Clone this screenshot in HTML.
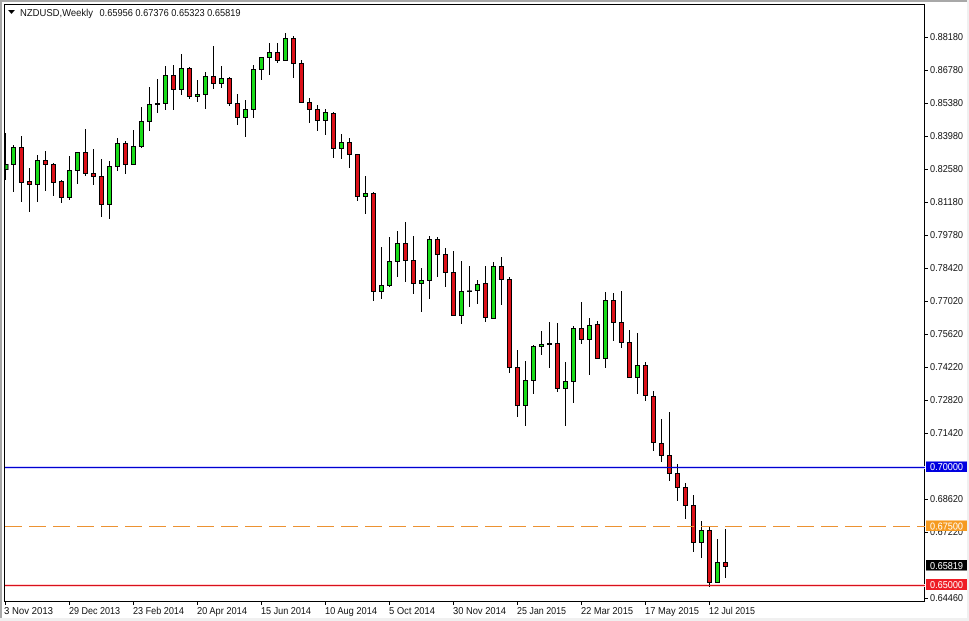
<!DOCTYPE html>
<html><head><meta charset="utf-8"><style>
html,body{margin:0;padding:0;background:#fff;width:969px;height:621px;overflow:hidden}
svg{display:block}
text{font-family:"Liberation Sans",sans-serif;font-size:10px;fill:#111;text-rendering:geometricPrecision}
</style></head><body>
<svg width="969" height="621" viewBox="0 0 969 621" xmlns="http://www.w3.org/2000/svg">
<rect width="969" height="621" fill="#fff"/>
<rect x="0" y="0" width="969" height="2" fill="#a8a8a8"/>
<rect x="0" y="0" width="2" height="621" fill="#a8a8a8"/>
<rect x="967" y="0" width="2" height="621" fill="#f0f0f0"/>
<rect x="0" y="618" width="969" height="3" fill="#f0f0f0"/>
<rect x="4.5" y="4.5" width="920" height="597" fill="#fff" stroke="#000"/>
<path stroke="#000" fill="none" d="M925 37.500h3M925 70.500h3M925 103.500h3M925 136.500h3M925 169.500h3M925 202.500h3M925 235.500h3M925 268.500h3M925 301.500h3M925 334.500h3M925 367.500h3M925 400.500h3M925 433.500h3M925 499.500h3M925 532.500h3M925 598.500h3M5.500 601v4M69.500 601v4M133.500 601v4M197.500 601v4M261.500 601v4M325.500 601v4M389.500 601v4M453.500 601v4M517.500 601v4M581.500 601v4M645.500 601v4M709.500 601v4"/>
<rect x="5" y="466" width="920" height="3" fill="#d4d4ff"/>
<rect x="5" y="584" width="920" height="3" fill="#ffd4d4"/>
<g stroke="#000" fill="none">
<path d="M5.500 133V180M13.500 145V192M21.500 136V202M29.500 168V212M37.500 155V202M45.500 151V191M53.500 163V196M61.500 180V203M69.500 156V200M77.500 152V184M85.500 129V176M93.500 149V185M101.500 159V217M109.500 161V219M117.500 138V171M125.500 141V174M133.500 130V165M141.500 107V148M149.500 87V131M157.500 79V113M165.500 66V110M173.500 65V110M181.500 54V95M189.500 67V99M197.500 80V102M205.500 72V109M213.500 46V89M221.500 66V88M229.500 77V106M237.500 94V125M245.500 100V137M253.500 65V118M261.500 57V80M269.500 43V75M277.500 43V63M285.500 33V61M293.500 36V78M301.500 60V103M309.500 98V123M317.500 105V131M325.500 109V135M333.500 112V158M341.500 134V159M349.500 138V168M357.500 154V201M365.500 176V214M373.500 192V301M381.500 247V299M389.500 237V287M397.500 231V277M405.500 222V282M413.500 236V294M421.500 268V312M429.500 236V299M437.500 237V277M445.500 248V287M453.500 251V315M461.500 261V324M469.500 266V307M477.500 280V304M485.500 266V322M493.500 262V319M501.500 257V305M509.500 277V373M517.500 350V417M525.500 361V426M533.500 345V394M541.500 331V355M549.500 322V368M557.500 323V392M565.500 362V426M573.500 326V403M581.500 302V344M589.500 318V375M597.500 321V359M605.500 292V368M613.500 293V341M621.500 291V348M629.500 330V378M637.500 333V394M645.500 362V401M653.500 391V451M661.500 419V462M669.500 412V481M677.500 464V501M685.500 483V519M693.500 495V552M701.500 521V558M709.500 527V587M717.500 539V582M725.500 529V578"/>
</g>
<path stroke="#000" fill="#18dc18" d="M5 164.500h3V169.500h-3zM11.500 147.500h4V164.500h-4zM35.500 160.500h4V184.500h-4zM67.500 170.500h4V197.500h-4zM75.500 152.500h4V170.500h-4zM107.500 166.500h4V204.500h-4zM115.500 143.500h4V166.500h-4zM131.500 146.500h4V164.500h-4zM139.500 121.500h4V146.500h-4zM147.500 104.500h4V121.500h-4zM163.500 75.500h4V103.500h-4zM179.500 68.500h4V89.500h-4zM195.500 94.500h4V96.500h-4zM203.500 76.500h4V94.500h-4zM219.500 78.500h4V83.500h-4zM243.500 109.500h4V117.500h-4zM251.500 69.500h4V109.500h-4zM259.500 57.500h4V69.500h-4zM267.500 52.500h4V57.500h-4zM283.500 38.500h4V60.500h-4zM323.500 112.500h4V120.500h-4zM339.500 142.500h4V148.500h-4zM363.500 193.500h4V196.500h-4zM379.500 285.500h4V291.500h-4zM387.500 261.500h4V285.500h-4zM395.500 243.500h4V261.500h-4zM419.500 280.500h4V283.500h-4zM427.500 239.500h4V280.500h-4zM459.500 291.500h4V315.500h-4zM475.500 284.500h4V290.500h-4zM491.500 266.500h4V318.500h-4zM523.500 380.500h4V405.500h-4zM531.500 346.500h4V380.500h-4zM539.500 344.500h4V346.500h-4zM563.500 381.500h4V388.500h-4zM571.500 328.500h4V381.500h-4zM587.500 325.500h4V339.500h-4zM603.500 300.500h4V358.500h-4zM635.500 365.500h4V377.500h-4zM699.500 530.500h4V542.500h-4zM715.500 562.500h4V582.500h-4z"/>
<path stroke="#000" fill="#dc1018" d="M19.500 147.500h4V182.500h-4zM27.500 181.500h4V184.500h-4zM43.500 160.500h4V164.500h-4zM51.500 164.500h4V182.500h-4zM59.500 181.500h4V197.500h-4zM83.500 152.500h4V173.500h-4zM91.500 173.500h4V176.500h-4zM99.500 176.500h4V204.500h-4zM123.500 143.500h4V164.500h-4zM155.500 103.500h4V104.500h-4zM171.500 75.500h4V89.500h-4zM187.500 68.500h4V96.500h-4zM211.500 76.500h4V83.500h-4zM227.500 78.500h4V103.500h-4zM235.500 103.500h4V117.500h-4zM275.500 52.500h4V60.500h-4zM291.500 38.500h4V63.500h-4zM299.500 63.500h4V102.500h-4zM307.500 102.500h4V109.500h-4zM315.500 109.500h4V120.500h-4zM331.500 113.500h4V148.500h-4zM347.500 142.500h4V154.500h-4zM355.500 154.500h4V196.500h-4zM371.500 193.500h4V291.500h-4zM403.500 243.500h4V260.500h-4zM411.500 260.500h4V283.500h-4zM435.500 239.500h4V254.500h-4zM443.500 254.500h4V272.500h-4zM451.500 272.500h4V315.500h-4zM467.500 291h4V291.500h-4zM483.500 283.500h4V317.500h-4zM499.500 266.500h4V279.500h-4zM507.500 279.500h4V367.500h-4zM515.500 367.500h4V405.500h-4zM547.500 343.500h4V344.500h-4zM555.500 343.500h4V388.500h-4zM579.500 328.500h4V339.500h-4zM595.500 324.500h4V358.500h-4zM611.500 300.500h4V322.500h-4zM619.500 322.500h4V342.500h-4zM627.500 342.500h4V377.500h-4zM643.500 365.500h4V395.500h-4zM651.500 396.500h4V442.500h-4zM659.500 443.500h4V455.500h-4zM667.500 455.500h4V473.500h-4zM675.500 473.500h4V487.500h-4zM683.500 487.500h4V505.500h-4zM691.500 505.500h4V542.500h-4zM707.500 530.500h4V582.500h-4zM723.500 562.500h4V566.500h-4z"/>
<rect x="5" y="467" width="920" height="1" fill="#0000d0"/>
<path d="M5 526.500H925" fill="none" stroke="#ec9232" stroke-dasharray="17 7"/>
<rect x="5" y="585" width="920" height="1" fill="#d8101c"/>
<path d="M8 10h7l-3.500 4z" fill="#000"/>
<text x="20" y="16" textLength="73" lengthAdjust="spacingAndGlyphs">NZDUSD,Weekly</text>
<text x="99.500" y="16" textLength="141" lengthAdjust="spacingAndGlyphs" xml:space="preserve">0.65956 0.67376 0.65323 0.65819</text>
<g>
<text x="930" y="40" textLength="33" lengthAdjust="spacingAndGlyphs">0.88180</text>
<text x="930" y="73" textLength="33" lengthAdjust="spacingAndGlyphs">0.86780</text>
<text x="930" y="106" textLength="33" lengthAdjust="spacingAndGlyphs">0.85380</text>
<text x="930" y="139" textLength="33" lengthAdjust="spacingAndGlyphs">0.83980</text>
<text x="930" y="172" textLength="33" lengthAdjust="spacingAndGlyphs">0.82580</text>
<text x="930" y="205" textLength="33" lengthAdjust="spacingAndGlyphs">0.81180</text>
<text x="930" y="238" textLength="33" lengthAdjust="spacingAndGlyphs">0.79780</text>
<text x="930" y="271" textLength="33" lengthAdjust="spacingAndGlyphs">0.78420</text>
<text x="930" y="304" textLength="33" lengthAdjust="spacingAndGlyphs">0.77020</text>
<text x="930" y="337" textLength="33" lengthAdjust="spacingAndGlyphs">0.75620</text>
<text x="930" y="370" textLength="33" lengthAdjust="spacingAndGlyphs">0.74220</text>
<text x="930" y="403" textLength="33" lengthAdjust="spacingAndGlyphs">0.72820</text>
<text x="930" y="436" textLength="33" lengthAdjust="spacingAndGlyphs">0.71420</text>
<text x="930" y="502" textLength="33" lengthAdjust="spacingAndGlyphs">0.68620</text>
<text x="930" y="535" textLength="33" lengthAdjust="spacingAndGlyphs">0.67220</text>
<text x="930" y="601" textLength="33" lengthAdjust="spacingAndGlyphs">0.64460</text>
</g>
<rect x="926" y="461.500" width="41" height="10.500" fill="#0000e0"/>
<text x="930" y="470" textLength="33" lengthAdjust="spacingAndGlyphs" style="fill:#fff">0.70000</text>
<rect x="926" y="520.500" width="41" height="10.500" fill="#f59a20"/>
<text x="930" y="529.500" textLength="33" lengthAdjust="spacingAndGlyphs" style="fill:#fff">0.67500</text>
<rect x="926" y="560" width="41" height="10.500" fill="#000"/>
<text x="930" y="569" textLength="33" lengthAdjust="spacingAndGlyphs" style="fill:#fff">0.65819</text>
<rect x="926" y="579" width="41" height="11" fill="#ee1c25"/>
<text x="930" y="588" textLength="33" lengthAdjust="spacingAndGlyphs" style="fill:#fff">0.65000</text>
<g>
<text x="4" y="614" textLength="49" lengthAdjust="spacingAndGlyphs">3 Nov 2013</text>
<text x="69" y="614" textLength="51" lengthAdjust="spacingAndGlyphs">29 Dec 2013</text>
<text x="133" y="614" textLength="51" lengthAdjust="spacingAndGlyphs">23 Feb 2014</text>
<text x="197" y="614" textLength="50" lengthAdjust="spacingAndGlyphs">20 Apr 2014</text>
<text x="261" y="614" textLength="50" lengthAdjust="spacingAndGlyphs">15 Jun 2014</text>
<text x="325" y="614" textLength="52" lengthAdjust="spacingAndGlyphs">10 Aug 2014</text>
<text x="389" y="614" textLength="46" lengthAdjust="spacingAndGlyphs">5 Oct 2014</text>
<text x="453" y="614" textLength="53" lengthAdjust="spacingAndGlyphs">30 Nov 2014</text>
<text x="517" y="614" textLength="49" lengthAdjust="spacingAndGlyphs">25 Jan 2015</text>
<text x="581" y="614" textLength="52" lengthAdjust="spacingAndGlyphs">22 Mar 2015</text>
<text x="645" y="614" textLength="54" lengthAdjust="spacingAndGlyphs">17 May 2015</text>
<text x="709" y="614" textLength="46" lengthAdjust="spacingAndGlyphs">12 Jul 2015</text>
</g>
</svg>
</body></html>
